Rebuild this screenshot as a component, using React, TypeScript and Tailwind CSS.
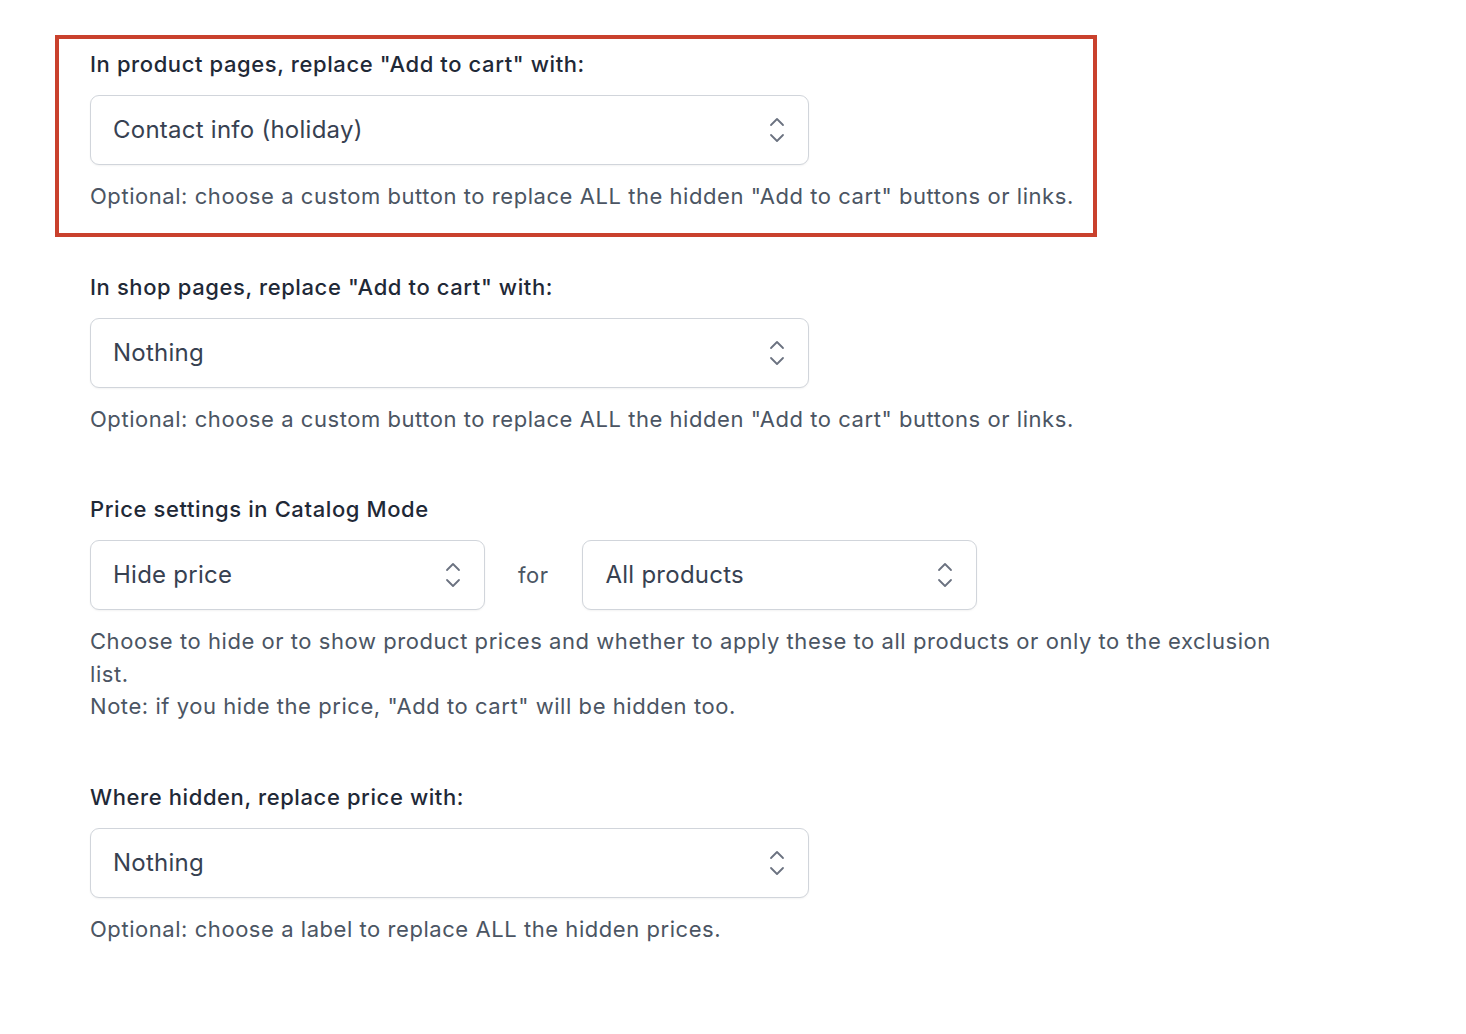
import React from "react";

function Chevrons() {
  return (
    <svg width="16" height="26" viewBox="0 0 16 26" fill="none" className="shrink-0">
      <path d="M2 8 L8 2 L14 8" stroke="#6b7280" strokeWidth="1.8" strokeLinecap="round" strokeLinejoin="round" />
      <path d="M2 18 L8 24 L14 18" stroke="#6b7280" strokeWidth="1.8" strokeLinecap="round" strokeLinejoin="round" />
    </svg>
  );
}

function Select({ value, width }: { value: string; width: string }) {
  return (
    <div
      className={`${width} h-[70px] flex items-center justify-between rounded-[9px] border border-[#d1d5db] bg-white pl-[22px] pr-[23px] shadow-[0_1px_2px_rgba(0,0,0,0.05)]`}
    >
      <span className="text-[24px] tracking-[0.25px] text-[#374151]">{value}</span>
      <Chevrons />
    </div>
  );
}

function Label({ children }: { children: React.ReactNode }) {
  return <div className="text-[22px] leading-[32px] tracking-[0.6px] font-medium text-[#1f2937]">{children}</div>;
}

function Help({ children }: { children: React.ReactNode }) {
  return <div className="mt-[15px] text-[22px] leading-[32.5px] tracking-[0.55px] text-[#4b5563]">{children}</div>;
}

export default function App() {
  return (
    <div className="min-h-[1034px] w-[1466px] bg-white pt-[35px]" style={{ fontFamily: "Inter, 'Noto Sans', sans-serif" }}>
      <div className="ml-[55px] w-[1042px] border-4 border-[#c9412d] pl-[31px] pt-[9px] pb-[20px]">
        <Label>In product pages, replace "Add to cart" with:</Label>
        <div className="mt-[15px]">
          <Select value="Contact info (holiday)" width="w-[719px]" />
        </div>
        <Help>Optional: choose a custom button to replace ALL the hidden "Add to cart" buttons or links.</Help>
      </div>

      <div className="ml-[90px] mt-[34px]">
        <Label>In shop pages, replace "Add to cart" with:</Label>
        <div className="mt-[15px]">
          <Select value="Nothing" width="w-[719px]" />
        </div>
        <Help>Optional: choose a custom button to replace ALL the hidden "Add to cart" buttons or links.</Help>
      </div>

      <div className="ml-[90px] mt-[58px]">
        <Label>Price settings in Catalog Mode</Label>
        <div className="mt-[15px] flex items-center">
          <Select value="Hide price" width="w-[395px]" />
          <span className="ml-[33px] mr-[34px] text-[22px] tracking-[0.5px] text-[#4b5563]">for</span>
          <Select value="All products" width="w-[395px]" />
        </div>
        <Help>
          <div className="w-[1200px]">
            Choose to hide or to show product prices and whether to apply these to all products or only to the exclusion list.
          </div>
          <div>Note: if you hide the price, "Add to cart" will be hidden too.</div>
        </Help>
      </div>

      <div className="ml-[90px] mt-[58px]">
        <Label>Where hidden, replace price with:</Label>
        <div className="mt-[15px]">
          <Select value="Nothing" width="w-[719px]" />
        </div>
        <Help>Optional: choose a label to replace ALL the hidden prices.</Help>
      </div>
    </div>
  );
}
